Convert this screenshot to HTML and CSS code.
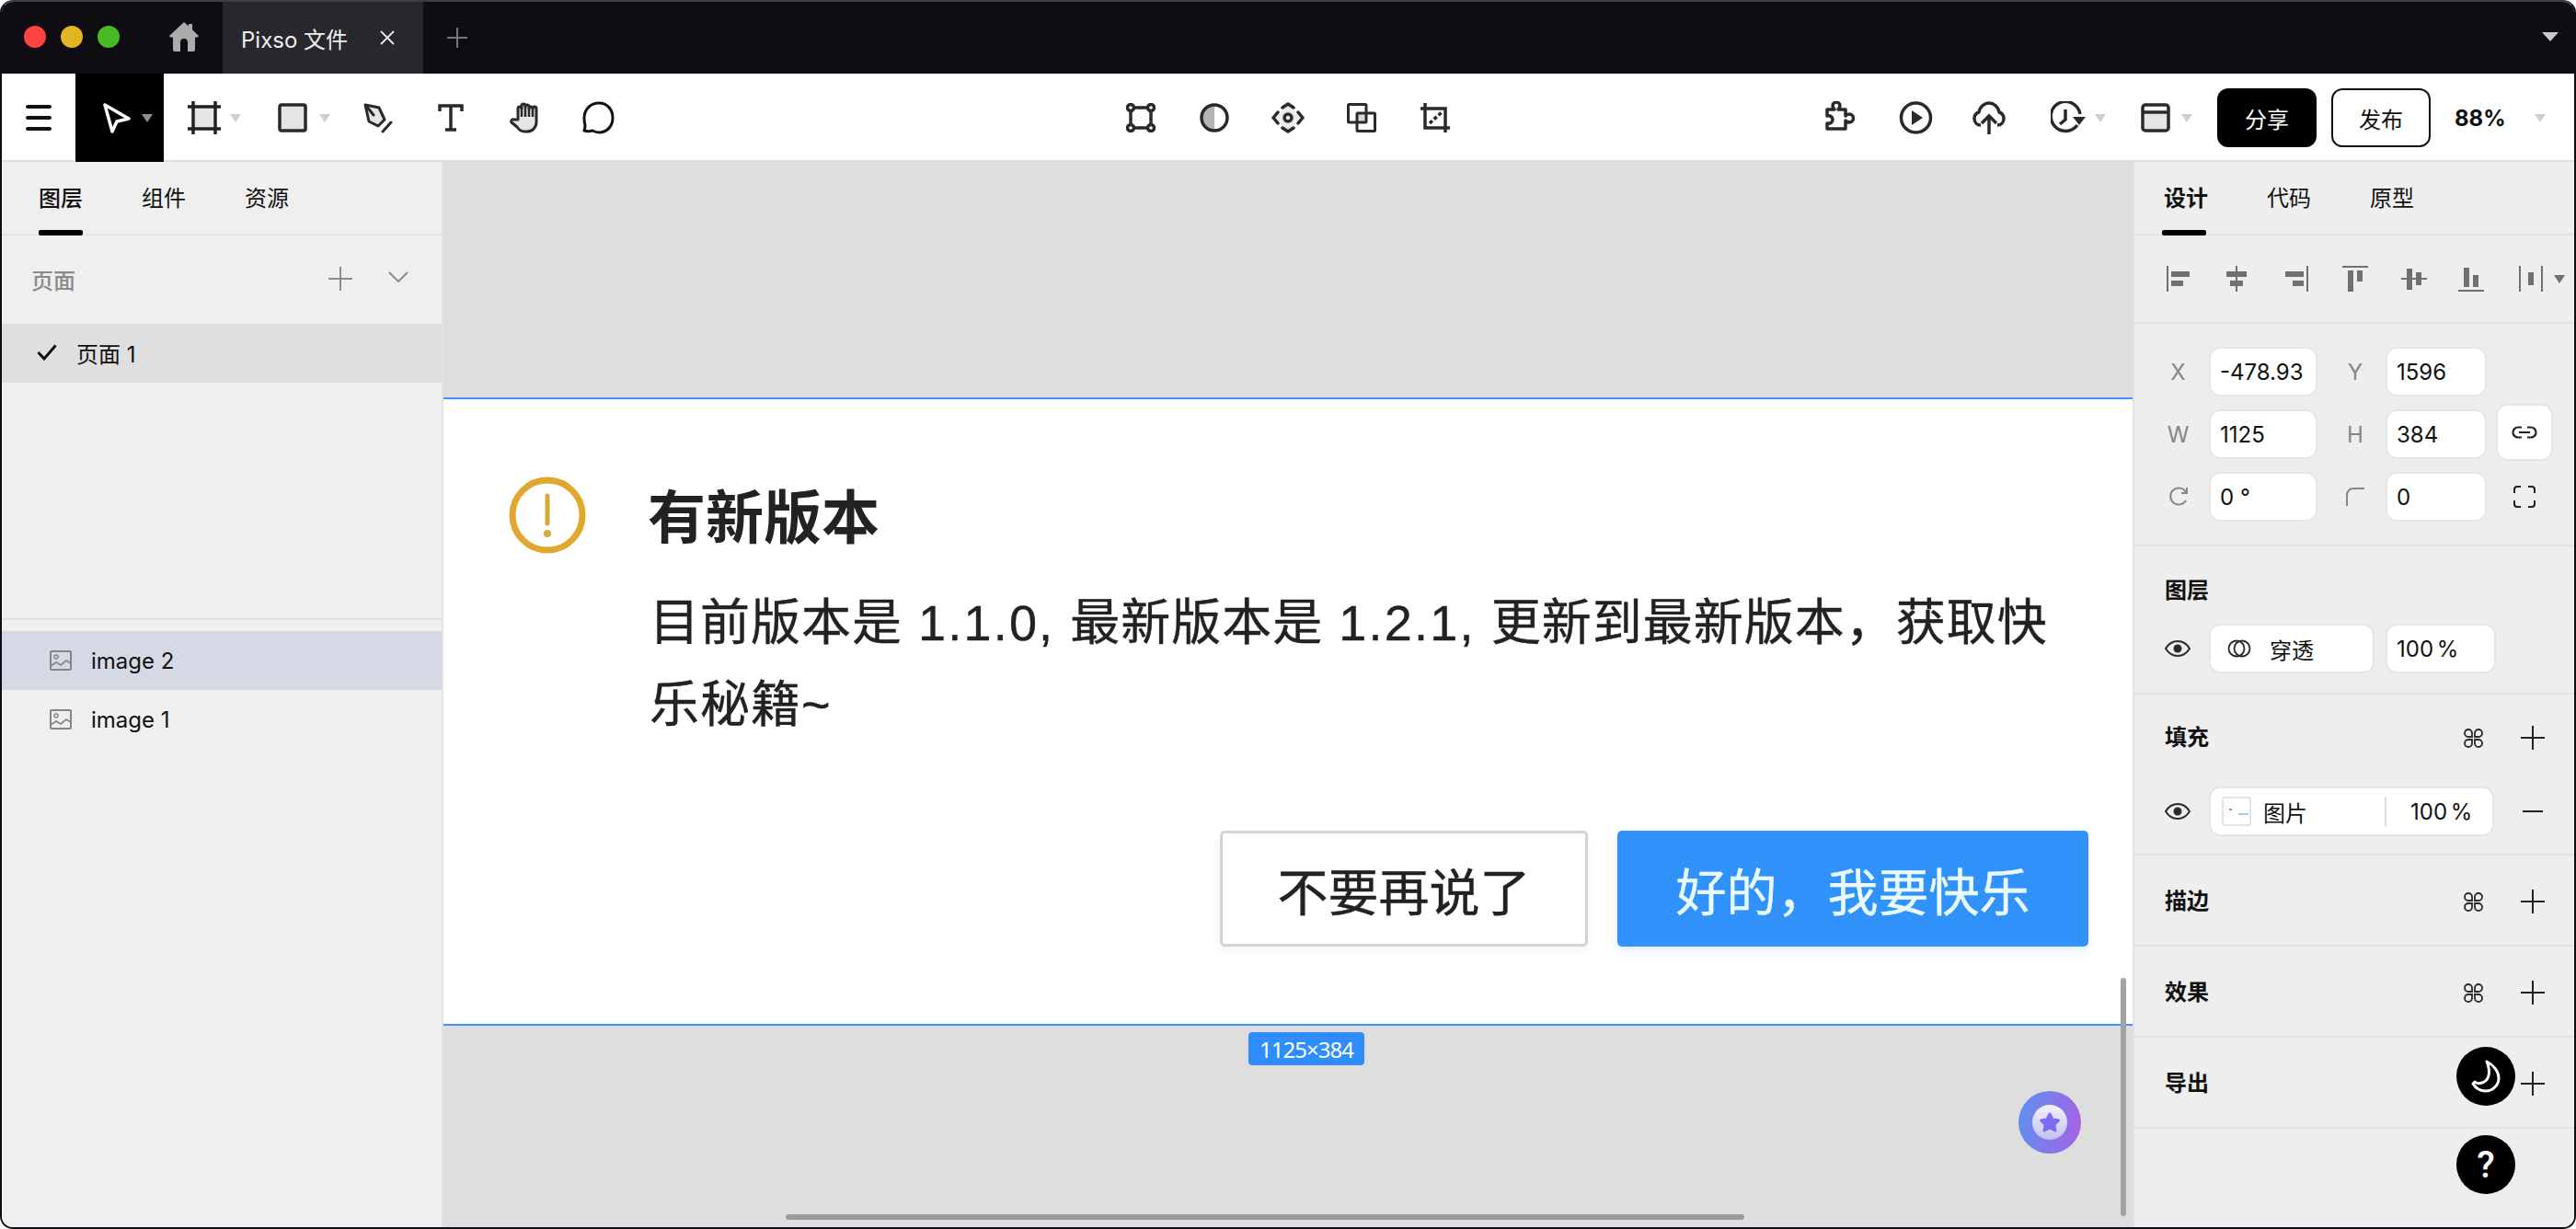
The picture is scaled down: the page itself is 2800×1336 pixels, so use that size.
FILE: index.html
```html
<!DOCTYPE html>
<html lang="zh-CN">
<head>
<meta charset="utf-8">
<title>Pixso 文件</title>
<link rel="stylesheet" href="styles.css">
</head>
<body>
<div class="window">
  <header class="titlebar">
    <div class="lights"><i class="light red"></i><i class="light yellow"></i><i class="light green"></i></div>
    <svg class="home" width="32" height="32" viewBox="0 0 32 32"><path fill="#ababab" d="M16 0l5 4.600V2h4v6.300L32 15l-1 1.500h-3V30a2 2 0 0 1-2 2h-6V22a4 4 0 0 0-8 0v10H6a2 2 0 0 1-2-2V16.500H1L0 15z"/></svg>
    <div class="tab"><span>Pixso 文件</span>
      <svg width="16" height="16" viewBox="0 0 16 16"><path stroke="#e8e8e8" stroke-width="1.800" d="M1 1l14 14M15 1L1 15"/></svg>
    </div>
    <svg class="newtab" width="22" height="22" viewBox="0 0 22 22"><path stroke="#77777a" stroke-width="2" d="M11 0v22M0 11h22"/></svg>
    <i class="caret caret-light"></i>
  </header>

  <nav class="toolbar">
    <div class="tools-left">
      <div class="menu"><svg width="28" height="28" viewBox="0 0 28 28"><path stroke="#111" stroke-width="4" stroke-linecap="round" d="M2 2h24M2 14h24M2 26h24"/></svg></div>
      <div class="select">
        <svg width="30" height="33" viewBox="0 0 30 33"><path fill="#000" stroke="#fff" stroke-width="3.500" stroke-linejoin="round" d="M2 2l26 15-13 3-5 11z"/></svg>
        <i class="caret caret-mid"></i>
      </div>
      <div class="tool t-frame">
        <svg width="36" height="36" viewBox="0 0 36 36"><rect x="6" y="6" width="24" height="24" fill="#e5e5e5"/><path stroke="#222" stroke-width="3.500" d="M6 0v36M30 0v36M0 6h36M0 30h36"/></svg>
        <i class="caret"></i>
      </div>
      <div class="tool t-rect">
        <svg width="32" height="32" viewBox="0 0 32 32"><rect x="2" y="2" width="28" height="28" rx="2" fill="#e5e5e5" stroke="#2a2a2a" stroke-width="3.500"/></svg>
        <i class="caret"></i>
      </div>
      <div class="tool t-pen">
        <svg width="32" height="33" viewBox="0 0 32 33"><path fill="#e5e5e5" stroke="#2a2a2a" stroke-width="3" stroke-linejoin="round" d="M2 2l15 3 6 13-7 7-10-5z"/><path fill="none" stroke="#2a2a2a" stroke-width="3" stroke-linecap="round" d="M3 3l8 10M21 31l9-10"/></svg>
      </div>
      <div class="tool t-text">
        <svg width="28" height="30" viewBox="0 0 28 30"><path fill="none" stroke="#2a2a2a" stroke-width="3.500" d="M2 8V2h24v6M14 2v27M8 28h12"/></svg>
      </div>
      <div class="tool t-hand">
        <svg width="34" height="34" viewBox="0 0 34 34"><path fill="#e5e5e5" stroke="#2a2a2a" stroke-width="3" stroke-linejoin="round" stroke-linecap="round" d="M9 19V7a2 2 0 0 1 4 0V4a2 2 0 0 1 4 0v1a2 2 0 0 1 4 0v2a2 2 0 0 1 4 0 2 2 0 0 1 4 0v15a10 10 0 0 1-10 10h-3c-4 0-6-2-8-5l-6-5c-1-2 1-4 3-3z"/><path stroke="#2a2a2a" stroke-width="2.500" d="M13 7v9M17 5v11M21 6v10M25 7v9"/></svg>
      </div>
      <div class="tool t-bubble">
        <svg width="35" height="36" viewBox="0 0 35 36"><path fill="none" stroke="#111" stroke-width="3" stroke-linejoin="round" d="M18 2c9 0 15 7 15 16s-6 16-15 16c-3 0-5-1-7-2-3 1-6 1-9 0 1-2 1-4 1-6-1-3-1-5-1-8C2 9 9 2 18 2z"/></svg>
      </div>
    </div>

    <div class="tools-center">
      <svg width="32" height="32" viewBox="0 0 32 32"><g fill="none" stroke="#2a2a2a" stroke-width="3.500"><path d="M5 9v14M9 5h14M27 9v14M9 27h14"/><circle cx="5" cy="5" r="3.500"/><circle cx="27" cy="5" r="3.500"/><circle cx="5" cy="27" r="3.500"/><circle cx="27" cy="27" r="3.500"/></g></svg>
      <svg width="32" height="32" viewBox="0 0 32 32"><path fill="#b4b4b4" d="M16 3a13 13 0 0 0 0 26z"/><circle cx="16" cy="16" r="14" fill="none" stroke="#2a2a2a" stroke-width="3.500"/></svg>
      <svg class="wide" width="36" height="34" viewBox="0 0 36 34"><path d="M18 3l15 14-15 14L3 17z" fill="#ececec"/><g fill="none" stroke="#2a2a2a" stroke-width="3.500" stroke-linecap="round" stroke-linejoin="round"><path d="M12 6l6-4 6 4M12 28l6 4 6-4M7 11l-5 6 5 6M29 11l5 6-5 6"/><circle cx="18" cy="17" r="4"/></g></svg>
      <svg width="32" height="32" viewBox="0 0 32 32"><rect x="11" y="11" width="10" height="10" fill="#d6d6d6"/><g fill="none" stroke="#2a2a2a" stroke-width="3"><rect x="1.500" y="1.500" width="19.500" height="19.500" rx="1"/><rect x="11" y="11" width="19.500" height="19.500" rx="1"/></g></svg>
      <svg width="32" height="32" viewBox="0 0 32 32"><path fill="none" stroke="#2a2a2a" stroke-width="3.500" d="M5 0v27h27M0 6h27v26"/><path stroke="#2a2a2a" stroke-width="3.500" stroke-dasharray="4 2.500" d="M10 22L23 10"/></svg>
    </div>

    <div class="tools-right">
      <svg class="r-puzzle" width="37" height="36" viewBox="0 0 37 36"><path fill="none" stroke="#2a2a2a" stroke-width="3.500" stroke-linejoin="round" d="M2 9h8c-1-1-2-2-2-4a4 4 0 0 1 8 0c0 2-1 3-2 4h8v7c1-1 2-2 4-2a4 4 0 0 1 0 9c-2 0-3-1-4-2v9H2v-6c3 1 6-1 6-4s-3-5-6-4z"/></svg>
      <svg class="r-play" width="37" height="36" viewBox="0 0 37 36"><circle cx="18.500" cy="18" r="16" fill="none" stroke="#2a2a2a" stroke-width="3.500"/><path fill="#2a2a2a" d="M14 10l12 8-12 8z"/></svg>
      <svg class="r-cloud" width="36" height="36" viewBox="0 0 36 36"><path fill="none" stroke="#2a2a2a" stroke-width="3.500" stroke-linejoin="round" d="M9 26c-4 0-7-3-7-7 0-3 2-6 5-7 1-6 6-10 11-10s10 4 11 10c3 1 5 4 5 7 0 4-3 7-7 7"/><path fill="none" stroke="#2a2a2a" stroke-width="3.500" d="M18 36V17M10 24l8-8 8 8"/></svg>
      <div class="r-history">
        <svg width="38" height="36" viewBox="0 0 38 36"><path fill="none" stroke="#2a2a2a" stroke-width="3.500" d="M29 26A16 16 0 1 1 32 14M16 9v11l-6 5"/><path fill="#2a2a2a" d="M24 17h14l-7 9z"/></svg>
        <i class="caret"></i>
      </div>
      <div class="r-layout">
        <svg width="32" height="32" viewBox="0 0 32 32"><rect x="2" y="10" width="28" height="20" fill="#e5e5e5"/><rect x="2" y="2" width="28" height="28" rx="3" fill="none" stroke="#2a2a2a" stroke-width="3.500"/><path stroke="#2a2a2a" stroke-width="3.500" d="M2 10h28"/></svg>
        <i class="caret"></i>
      </div>
      <div class="btn btn-dark">分享</div>
      <div class="btn btn-line">发布</div>
      <div class="zoomval">88%</div>
      <i class="caret"></i>
    </div>
  </nav>

  <main class="workspace">
    <aside class="left">
      <div class="tabs"><span class="tabitem active">图层</span><span class="tabitem">组件</span><span class="tabitem">资源</span></div>
      <div class="pages">
        <span class="pages-title">页面</span>
        <svg class="pages-plus" width="26" height="26" viewBox="0 0 26 26"><path stroke="#8c8c8c" stroke-width="2" d="M13 0v26M0 13h26"/></svg>
        <svg class="pages-chev" width="22" height="12" viewBox="0 0 22 12"><path fill="none" stroke="#8c8c8c" stroke-width="2" d="M1 1l10 10L21 1"/></svg>
      </div>
      <div class="page-row">
        <svg width="22" height="18" viewBox="0 0 22 18"><path fill="none" stroke="#111" stroke-width="3" d="M1.500 9l6.500 7L20.500 1.500"/></svg>
        <span>页面 1</span>
      </div>
      <div class="page-spacer"></div>
      <div class="layers">
        <div class="layer selected">
          <svg width="24" height="22" viewBox="0 0 24 22"><rect x="1" y="1" width="22" height="20" rx="1" fill="none" stroke="#858585" stroke-width="2"/><circle cx="7" cy="7" r="2" fill="none" stroke="#858585" stroke-width="1.500"/><path fill="none" stroke="#858585" stroke-width="1.800" d="M1 17l6-4 5 3 6-5 5 3"/></svg>
          <span>image 2</span>
        </div>
        <div class="layer">
          <svg width="24" height="22" viewBox="0 0 24 22"><rect x="1" y="1" width="22" height="20" rx="1" fill="none" stroke="#858585" stroke-width="2"/><circle cx="7" cy="7" r="2" fill="none" stroke="#858585" stroke-width="1.500"/><path fill="none" stroke="#858585" stroke-width="1.800" d="M1 17l6-4 5 3 6-5 5 3"/></svg>
          <span>image 1</span>
        </div>
      </div>
    </aside>

    <section class="canvas">
      <div class="artboard">
        <div class="dialog">
          <svg class="warn" width="86" height="86" viewBox="0 0 86 86"><circle cx="43" cy="43" r="38" fill="#fff" stroke="#e2a72e" stroke-width="7"/><path stroke="#d9a93a" stroke-width="5" stroke-linecap="round" d="M43 22v30"/><circle cx="43" cy="63" r="4" fill="#d9a93a"/></svg>
          <div class="dialog-text">
            <h1>有新版本</h1>
            <p>目前版本是 <span class="ver">1.1.0,</span> 最新版本是 <span class="ver">1.2.1,</span> 更新到最新版本，获取快<br>乐秘籍~</p>
          </div>
        </div>
        <div class="dialog-actions">
          <div class="dlg-btn dlg-ghost">不要再说了</div>
          <div class="dlg-btn dlg-primary">好的，我要快乐</div>
        </div>
      </div>
      <div class="sizetag">1125×384</div>
      <div class="star"><div class="star-core"><svg width="24" height="24" viewBox="0 0 24 24"><path fill="#7b6cf0" stroke="#7b6cf0" stroke-width="3" stroke-linejoin="round" d="M12 3l3 6 6.500 1-4.700 4.500 1.100 6.500-5.900-3.100L6.100 21l1.100-6.500L2.500 10 9 9z"/></svg></div></div>
      <div class="vscroll"></div>
      <div class="hscroll"></div>
    </section>

    <aside class="right">
      <div class="tabs tabs-r"><span class="tabitem active strong">设计</span><span class="tabitem">代码</span><span class="tabitem">原型</span></div>
      <div class="aligns">
        <svg width="26" height="28" viewBox="0 0 26 28"><path fill="#707070" d="M1 0h2v28H1zM6 6h20v6H6zM6 16h13v6H6z"/></svg>
        <svg width="22" height="28" viewBox="0 0 22 28"><path fill="#707070" d="M10 0h2v28h-2zM0 6h22v6H0zM4 16h14v6H4z"/></svg>
        <svg width="26" height="28" viewBox="0 0 26 28"><path fill="#707070" d="M23 0h2v28h-2zM0 6h20v6H0zM8 16h12v6H8z"/></svg>
        <svg width="28" height="28" viewBox="0 0 28 28"><path fill="#707070" d="M0 0h28v2H0zM6 5h6v23H6zM16 5h6v12h-6z"/></svg>
        <svg width="28" height="28" viewBox="0 0 28 28"><path fill="#707070" d="M0 13h28v2H0zM6 3h6v23H6zM16 7h6v14h-6z"/></svg>
        <svg width="28" height="28" viewBox="0 0 28 28"><path fill="#707070" d="M0 26h28v2H0zM6 2h6v21H6zM16 10h6v13h-6z"/></svg>
        <div class="distribute">
          <svg width="26" height="28" viewBox="0 0 26 28"><path fill="#707070" d="M0 0h2v28H0zM24 0h2v28h-2zM10 7h6v14h-6z"/></svg>
          <i class="caret caret-gray"></i>
        </div>
      </div>
      <div class="props">
        <span class="lbl lbl-a">X</span><div class="field">-478.93</div>
        <span class="lbl lbl-b">Y</span><div class="field">1596</div><span></span>
        <span class="lbl lbl-a">W</span><div class="field">1125</div>
        <span class="lbl lbl-b">H</span><div class="field">384</div>
        <div class="field linkbtn"><svg width="28" height="14" viewBox="0 0 28 14"><path fill="none" stroke="#222" stroke-width="2.200" d="M11 1.500H7a5.500 5.500 0 0 0 0 11h4M17 1.500h4a5.500 5.500 0 0 1 0 11h-4M8 7h12"/></svg></div>
        <span class="lbl lbl-a"><svg width="22" height="22" viewBox="0 0 22 22"><path fill="none" stroke="#868686" stroke-width="2" d="M19 15a9 9 0 1 1 0-9M20 1v6h-6"/></svg></span><div class="field">0 °</div>
        <span class="lbl lbl-b"><svg width="20" height="20" viewBox="0 0 20 20"><path fill="none" stroke="#868686" stroke-width="2" d="M1 20V8a7 7 0 0 1 7-7h12"/></svg></span><div class="field">0</div>
        <span class="corners"><svg width="24" height="24" viewBox="0 0 24 24"><path fill="none" stroke="#222" stroke-width="2" d="M1 8V4a3 3 0 0 1 3-3h4M16 1h4a3 3 0 0 1 3 3v4M23 16v4a3 3 0 0 1-3 3h-4M8 23H4a3 3 0 0 1-3-3v-4"/></svg></span>
      </div>
      <div class="sec sec-layer">
        <div class="sec-title">图层</div>
        <div class="rowline">
          <svg class="eye" width="28" height="18" viewBox="0 0 28 18"><path fill="none" stroke="#2a2a2a" stroke-width="2" d="M1 9c3-5 8-8 13-8s10 3 13 8c-3 5-8 8-13 8S4 14 1 9z"/><circle cx="14" cy="9" r="4.500" fill="#2a2a2a"/></svg>
          <div class="field blend">
            <svg width="26" height="20" viewBox="0 0 26 20"><g fill="none" stroke="#2a2a2a" stroke-width="1.800"><circle cx="10" cy="10" r="8.500"/><circle cx="16" cy="10" r="8.500"/></g></svg>
            <span>穿透</span>
          </div>
          <div class="field pct">100 %</div>
        </div>
      </div>
      <div class="sec sec-fill">
        <div class="sec-head">
          <span class="sec-title">填充</span>
          <svg class="cmd" width="23" height="21" viewBox="0 0 23 21"><g fill="none" stroke="#2a2a2a" stroke-width="1.800"><path d="M10 9H6a4 4 0 1 1 4-4zM13 9h4a4 4 0 1 0-4-4zM10 12H6a4 4 0 1 0 4 4zM13 12h4a4 4 0 1 1-4 4z"/></g></svg>
          <svg class="plus" width="26" height="26" viewBox="0 0 26 26"><path stroke="#222" stroke-width="2" d="M13 0v26M0 13h26"/></svg>
        </div>
        <div class="rowline">
          <svg class="eye" width="28" height="18" viewBox="0 0 28 18"><path fill="none" stroke="#2a2a2a" stroke-width="2" d="M1 9c3-5 8-8 13-8s10 3 13 8c-3 5-8 8-13 8S4 14 1 9z"/><circle cx="14" cy="9" r="4.500" fill="#2a2a2a"/></svg>
          <div class="field fillbox">
            <div class="thumb"><i class="thumb-a"></i><i class="thumb-b"></i></div>
            <span class="fillname">图片</span>
            <i class="vsep"></i>
            <span class="fillpct">100 %</span>
          </div>
          <svg class="minus" width="22" height="2" viewBox="0 0 22 2"><path stroke="#222" stroke-width="2" d="M0 1h22"/></svg>
        </div>
      </div>
      <div class="sec sec-plain">
        <div class="sec-head">
          <span class="sec-title">描边</span>
          <svg class="cmd" width="23" height="21" viewBox="0 0 23 21"><g fill="none" stroke="#2a2a2a" stroke-width="1.800"><path d="M10 9H6a4 4 0 1 1 4-4zM13 9h4a4 4 0 1 0-4-4zM10 12H6a4 4 0 1 0 4 4zM13 12h4a4 4 0 1 1-4 4z"/></g></svg>
          <svg class="plus" width="26" height="26" viewBox="0 0 26 26"><path stroke="#222" stroke-width="2" d="M13 0v26M0 13h26"/></svg>
        </div>
      </div>
      <div class="sec sec-plain">
        <div class="sec-head">
          <span class="sec-title">效果</span>
          <svg class="cmd" width="23" height="21" viewBox="0 0 23 21"><g fill="none" stroke="#2a2a2a" stroke-width="1.800"><path d="M10 9H6a4 4 0 1 1 4-4zM13 9h4a4 4 0 1 0-4-4zM10 12H6a4 4 0 1 0 4 4zM13 12h4a4 4 0 1 1-4 4z"/></g></svg>
          <svg class="plus" width="26" height="26" viewBox="0 0 26 26"><path stroke="#222" stroke-width="2" d="M13 0v26M0 13h26"/></svg>
        </div>
      </div>
      <div class="sec sec-plain">
        <div class="sec-head">
          <span class="sec-title">导出</span>
          <svg class="plus" width="26" height="26" viewBox="0 0 26 26"><path stroke="#222" stroke-width="2" d="M13 0v26M0 13h26"/></svg>
        </div>
      </div>
      <div class="fab fab-moon"><svg width="32" height="36" viewBox="0 0 32 36"><path fill="none" stroke="#fff" stroke-width="3" stroke-linejoin="round" d="M17 2c8 4 13 11 13 18 0 8-7 14-14 14-6 0-11-3-14-8l2-2c2 2 5 2 8 1 7-2 10-11 5-23z"/></svg></div>
      <div class="fab fab-help">?</div>
    </aside>
  </main>
</div>
</body>
</html>
```
FILE: styles.css
```css
* { box-sizing: border-box; }
html, body { margin: 0; padding: 0; background: #fff; }
body {
  width: 2800px; height: 1336px; overflow: hidden;
  font-family: Inter, "Noto Sans CJK SC", "Noto Sans", sans-serif;
  font-size: 24px; color: #111;
}
svg { display: block; flex: none; }
i { display: block; }
.window {
  width: 2800px; height: 1336px; overflow: hidden;
  display: flex; flex-direction: column;
  border: 2px solid #0e0d12; border-top-color: #3e3e42; border-radius: 14px;
  background: #eee;
}
.caret { width: 0; height: 0; flex: none; border-left: 6px solid transparent; border-right: 6px solid transparent; border-top: 9px solid #cfcfcf; }
.caret-light { border-top-color: #c9c9c9; margin-left: auto; margin-right: 17px; margin-top: -2px; border-left-width: 9px; border-right-width: 9px; border-top-width: 10px; }
.caret-mid { border-top-color: #8f8f8f; }
.caret-gray { border-top-color: #6f6f6f; }

/* title bar */
.titlebar { height: 78px; flex: none; background: #0e0d12; display: flex; align-items: center; }
.lights { display: flex; gap: 16px; margin-left: 24px; margin-top: -2px; }
.light { width: 24px; height: 24px; border-radius: 50%; }
.red { background: #ff4343; }
.yellow { background: #e2b522; }
.green { background: #47ba24; }
.home { margin-left: 54px; margin-top: -2px; }
.tab {
  margin-left: 26px; width: 218px; height: 78px; background: #27272c; color: #eee;
  display: flex; align-items: center; padding-left: 20px; gap: 35px; font-size: 24px; white-space: nowrap;
}
.newtab { margin-left: 26px; }

/* toolbar */
.toolbar {
  height: 96px; flex: none; background: #fff; border-bottom: 2px solid #e0e0e0;
  display: grid; grid-template-columns: 1fr auto 1fr; align-items: center;
}
.tools-left { display: flex; align-items: center; height: 96px; }
.menu { width: 80px; display: flex; justify-content: flex-start; padding-left: 26px; }
.select { width: 96px; height: 96px; background: #000; display: flex; align-items: center; padding-left: 30px; gap: 12px; }
.tool { display: flex; align-items: center; }
.t-frame { margin-left: 26px; gap: 10px; }
.t-rect { margin-left: 40px; gap: 13px; }
.t-pen { margin-left: 36px; }
.t-text { margin-left: 49px; }
.t-hand { margin-left: 50px; }
.t-bubble { margin-left: 45px; }
.tools-center { display: flex; align-items: center; gap: 48px; }
.tools-center .wide { margin: 0 -2px; }
.tools-right { display: flex; align-items: center; justify-content: flex-end; padding-right: 31px; }
.r-play { margin-left: 43px; }
.r-cloud { margin-left: 43px; }
.r-history { margin-left: 49px; display: flex; align-items: center; gap: 10px; }
.r-layout { margin-left: 38px; display: flex; align-items: center; gap: 12px; }
.btn { width: 108px; height: 64px; border-radius: 12px; display: flex; align-items: center; justify-content: center; font-size: 24px; }
.btn-dark { margin-left: 27px; background: #000; color: #fff; }
.btn-line { margin-left: 16px; background: #fff; border: 2px solid #111; }
.zoomval { margin-left: 26px; width: 87px; font-weight: 700; font-size: 24px; }

/* workspace */
.workspace { flex: 1; display: grid; grid-template-columns: 480px 1fr 480px; min-height: 0; }
.left { background: #efefef; border-right: 2px solid #e2e2e2; display: flex; flex-direction: column; }
.tabs { height: 80px; border-bottom: 2px solid #e3e3e3; display: flex; gap: 64px; padding-left: 40px; align-items: stretch; }
.tabitem { width: 48px; position: relative; display: flex; align-items: center; padding-bottom: 3px; white-space: nowrap; }
.tabitem.active { font-weight: 500; }
.tabitem.strong { font-weight: 700; }
.tabitem.active::after { content: ""; position: absolute; left: 0; right: 0; bottom: -2px; height: 6px; background: #000; border-radius: 2px; }
.pages { height: 96px; display: flex; align-items: center; padding: 0 36px 2px 32px; color: #8a8a8a; }
.pages-title { flex: 1; font-weight: 500; }
.pages-plus { margin-right: 39px; }
.pages-chev { margin-top: -4px; }
.page-row { height: 64px; background: #dfdfdf; display: flex; align-items: center; padding: 0 0 2px 38px; gap: 21px; }
.page-spacer { height: 258px; border-bottom: 2px solid #e2e2e2; }
.layers { padding-top: 12px; }
.layer { height: 64px; display: flex; align-items: center; padding-left: 52px; gap: 21px; }
.layer.selected { background: #d5d9e6; }

/* canvas */
.canvas { background: #dedede; position: relative; overflow: hidden; }
.artboard {
  position: absolute; left: -52px; top: 256px; width: 1980px; height: 683px;
  background: #fff; border-top: 2px solid #3f92ff; border-bottom: 2px solid #3f92ff;
  color: #222; padding-top: 83px;
}
.dialog { display: flex; padding-left: 122px; filter: blur(0.6px); }
.warn { margin-right: 66px; }
h1 { margin: 2px 0 0; font-size: 63px; line-height: 86px; font-weight: 700; }
.dialog-text p {
  margin: 28px 0 0 2px; font-size: 54px; line-height: 89px; white-space: nowrap;
  font-family: "Liberation Sans", "Noto Sans CJK SC", sans-serif;
  letter-spacing: 1px; word-spacing: 1px; -webkit-text-stroke: 0.4px #222;
}
.ver { letter-spacing: 2.2px; }
.dialog-actions { display: flex; justify-content: flex-end; gap: 32px; padding-right: 140px; margin-top: 92px; filter: blur(0.6px); }
.dlg-btn { height: 126px; border-radius: 5px; display: flex; align-items: center; justify-content: center; font-size: 55px; -webkit-text-stroke: 0.4px; font-family: "Noto Sans CJK SC", sans-serif; }
.dlg-ghost { width: 400px; background: #fff; border: 3px solid #d4d4d4; box-shadow: 0 6px 10px rgba(0,0,0,.04); }
.dlg-primary { width: 512px; background: #3292fb; color: #e9fbff; box-shadow: 0 6px 12px rgba(50,146,251,.12); }
.sizetag {
  position: absolute; left: 875px; top: 946px; width: 126px; height: 36px; border-radius: 4px;
  background: #2f8dff; color: #fff; font-size: 24px; display: flex; align-items: center; justify-content: center;
  font-family: "Noto Sans", sans-serif; letter-spacing: -1px;
}
.star {
  position: absolute; left: 1712px; top: 1010px; width: 68px; height: 68px; border-radius: 50%;
  background: linear-gradient(100deg, #5a93ee, #a95fe6);
  display: flex; align-items: center; justify-content: center;
}
.star-core { width: 38px; height: 38px; border-radius: 50%; background: linear-gradient(#f4f3fc, #c4bff2); display: flex; align-items: center; justify-content: center; }
.vscroll { position: absolute; left: 1823px; top: 887px; width: 6px; height: 259px; border-radius: 3px; background: #a3a3a3; }
.hscroll { position: absolute; left: 372px; top: 1144px; width: 1042px; height: 6px; border-radius: 3px; background: #9b9b9b; }

/* right panel */
.right { background: #eee; border-left: 2px solid #e2e2e2; position: relative; display: flex; flex-direction: column; }
.tabs-r { padding-left: 30px; }
.tabs-r .tabitem { padding-left: 2px; }
.aligns { height: 96px; border-bottom: 2px solid #e3e3e3; display: flex; align-items: center; padding-left: 34px; }
.aligns > svg, .distribute { margin-right: 38px; }
.aligns > svg:nth-child(1) { margin-right: 40px; }
.aligns > svg:nth-child(2) { margin-right: 42px; }
.aligns > svg:nth-child(3) { margin-right: 36px; }
.aligns > svg:nth-child(4) { margin-right: 36px; }
.aligns > svg:nth-child(5) { margin-right: 34px; }
.distribute { display: flex; align-items: center; gap: 12px; }
.props {
  height: 242px; border-bottom: 2px solid #e3e3e3; padding-top: 25px; padding-left: 28px;
  display: grid; grid-template-columns: 53px 118px 74px 110px 62px; grid-auto-rows: 54px; row-gap: 14px; align-items: center;
}
.lbl { color: #868686; font-size: 24px; display: flex; justify-content: center; }
.lbl-a { padding-right: 14px; }
.lbl-b { padding-left: 8px; }
.field {
  background: #fff; border: 2px solid #e6e6e6; border-radius: 12px; height: 54px;
  display: flex; align-items: center; padding-left: 10px; font-size: 24px; white-space: nowrap;
}
.linkbtn { margin-left: 10px; height: 62px; width: 62px; padding: 0; justify-content: center; margin-top: -4px; }
.corners { margin-left: 10px; width: 62px; display: flex; justify-content: center; }
.sec { border-bottom: 2px solid #e3e3e3; padding-left: 33px; padding-right: 32px; }
.sec-title { font-weight: 700; font-size: 24px; line-height: 34px; }
.sec-layer { height: 161px; padding-top: 31px; }
.rowline { display: flex; align-items: center; }
.sec-layer .rowline { margin-top: 19px; }
.eye { margin-right: 20px; }
.blend { width: 180px; gap: 20px; padding-left: 18px; }
.pct { width: 120px; margin-left: 12px; padding-left: 10px; word-spacing: -3px; }
.sec-head { display: flex; align-items: center; height: 34px; }
.sec-head .sec-title { flex: 1; }
.cmd { margin-right: 40px; }
.sec-fill { height: 175px; padding-top: 30px; }
.sec-fill .rowline { margin-top: 36px; }
.fillbox { width: 310px; padding-left: 12px; }
.thumb { width: 32px; height: 32px; border: 2px solid #e3e3e3; border-radius: 3px; background: #fff; position: relative; flex: none; }
.thumb-a { position: absolute; left: 6px; top: 11px; width: 3px; height: 2px; background: #999; }
.thumb-b { position: absolute; left: 16px; top: 16px; width: 11px; height: 2px; background: #9ccdf5; }
.fillname { margin-left: 13px; width: 113px; }
.vsep { width: 2px; height: 32px; background: #dedede; flex: none; margin-left: 19px; }
.fillpct { margin-left: 26px; word-spacing: -3px; }
.minus { margin-left: 31px; }
.sec-plain { height: 99px; padding-top: 33px; }
.fab { position: absolute; left: 350px; width: 64px; height: 64px; border-radius: 50%; background: #000; color: #fff; display: flex; align-items: center; justify-content: center; }
.fab-moon { top: 962px; }
.fab-help { top: 1058px; font-family: Roboto, sans-serif; font-size: 40px; font-weight: 500; }
```
